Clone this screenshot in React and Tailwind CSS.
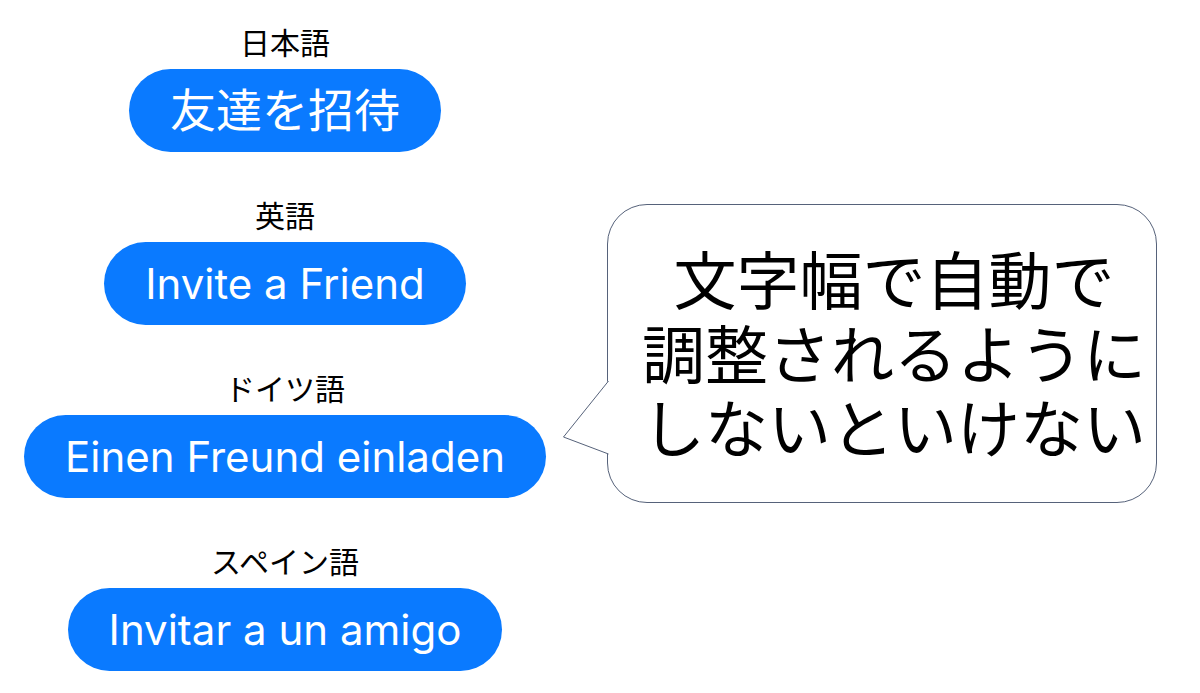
const items = [
  { label: '日本語', text: '友達を招待', size: 'text-[46px]' },
  { label: '英語', text: 'Invite a Friend', size: 'text-[42px]' },
  { label: 'ドイツ語', text: 'Einen Freund einladen', size: 'text-[42px]' },
  { label: 'スペイン語', text: 'Invitar a un amigo', size: 'text-[42px]' },
];

const cjk = { fontFamily: '"Noto Sans CJK JP", sans-serif' };
const btnFont = { fontFamily: 'Inter, "Noto Sans CJK JP", sans-serif' };

const lines = ['文字幅で自動で', '調整されるように', 'しないといけない'];

const Bubble = () => (
  <div className="relative ml-[37px] mt-[204px] w-[550px] h-[299px] rounded-[40px] border border-[#56627a] bg-white">
    {/* tail pointing left */}
    <svg className="absolute left-[-46px] top-[170px]" width="50" height="86" viewBox="0 0 50 86">
      <polygon points="1.5,62 46,6 49,6 49,79 46,79" fill="#fff" />
      <polyline points="46.5,6 1.5,62 46.5,79" fill="none" stroke="#56627a" strokeWidth="1" />
    </svg>
    <div className="h-full flex flex-col items-center justify-center pl-[24px] pb-[6px]" style={cjk}>
      {lines.map((l) => (
        <div key={l} className="text-[63px] leading-[74px] text-black whitespace-nowrap">{l}</div>
      ))}
    </div>
  </div>
);

export default function App() {
  return (
    <div className="w-[1200px] h-[693px] bg-white flex overflow-hidden">
      <div className="w-[570px] flex flex-col items-center pt-[23px] gap-[44px]">
        {items.map((it) => (
          <div key={it.label} className="flex flex-col items-center">
            <div className="h-[36px] leading-[36px] text-[30px] text-black" style={cjk}>{it.label}</div>
            <div
              className={`mt-[10px] h-[83px] px-[41px] rounded-full bg-[#0a7aff] text-white flex items-center whitespace-nowrap ${it.size}`}
              style={btnFont}
            >
              {it.text}
            </div>
          </div>
        ))}
      </div>
      <Bubble />
    </div>
  );
}
